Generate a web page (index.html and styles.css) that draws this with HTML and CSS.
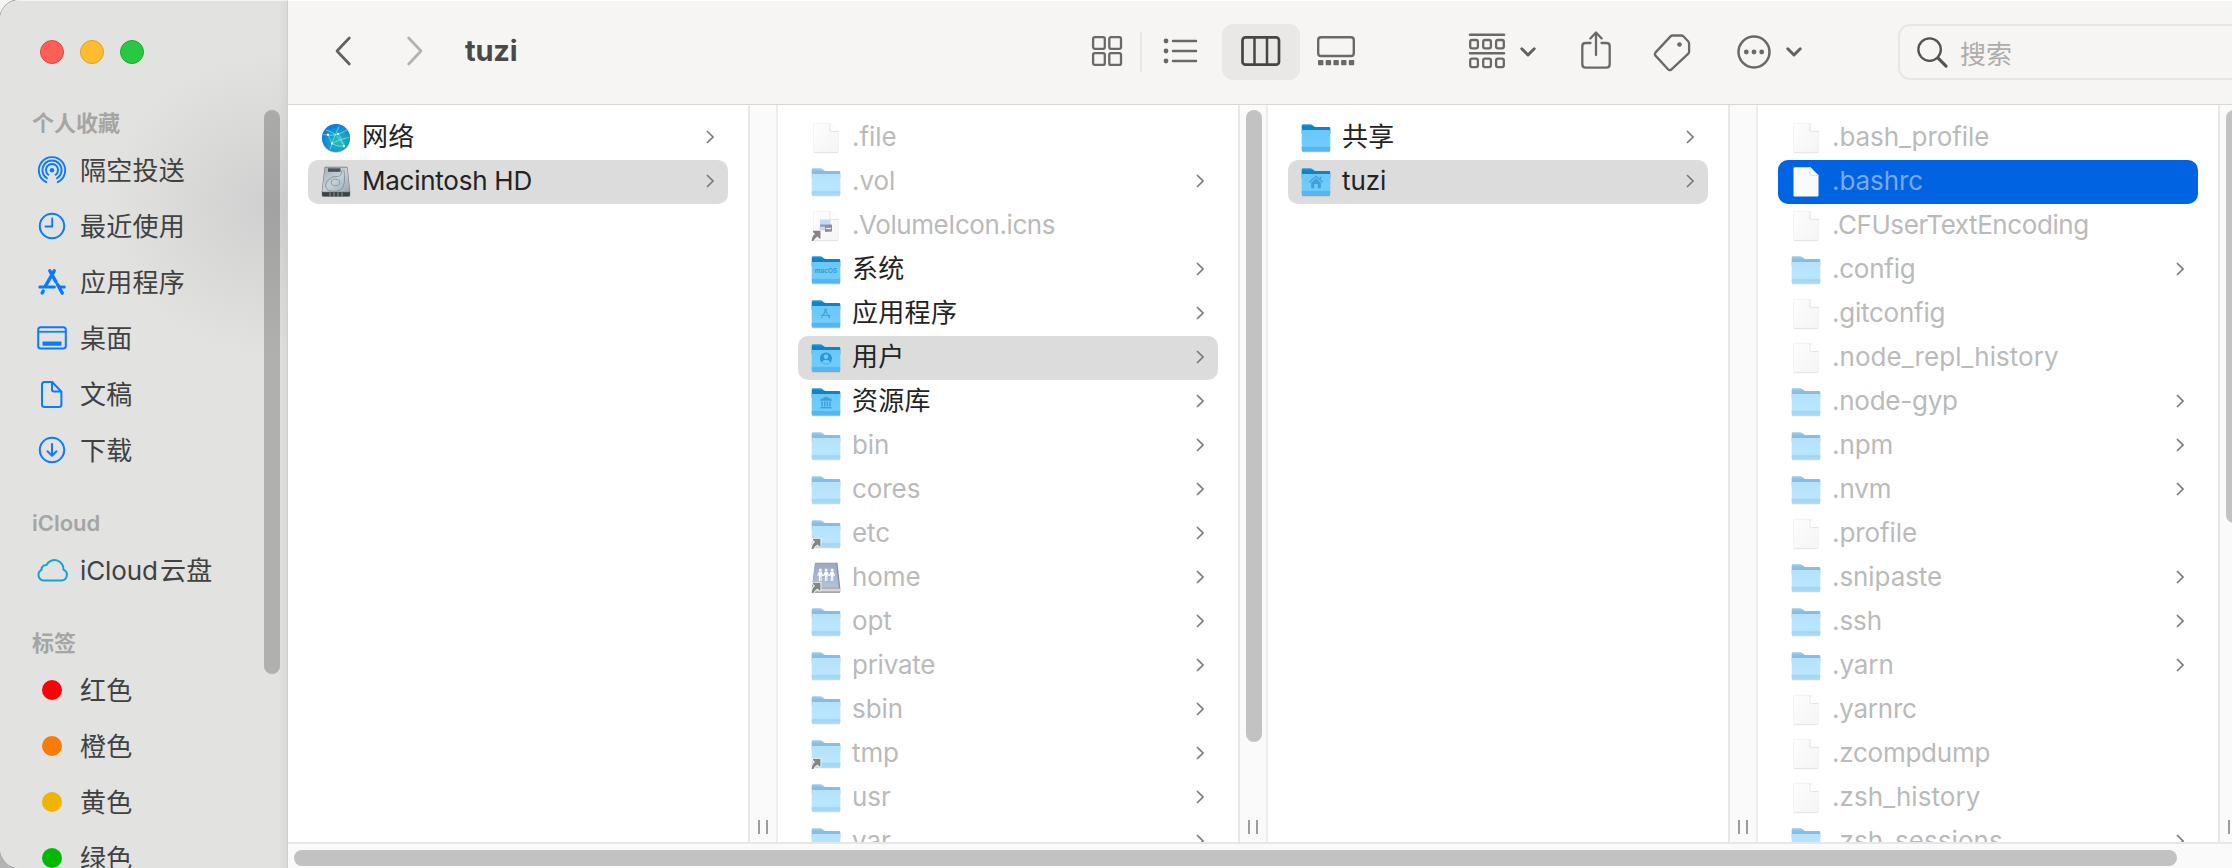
FILE: index.html
```html
<!DOCTYPE html>
<html lang="zh-CN">
<head>
<meta charset="utf-8">
<title>tuzi</title>
<link rel="stylesheet" href="styles.css">
</head>
<body>
<svg class="sprite" aria-hidden="true">
  <defs>
    <linearGradient id="gBack" x1="0" y1="0" x2="0" y2="1"><stop offset="0" stop-color="#2f9fdc"/><stop offset=".25" stop-color="#0f83c6"/><stop offset="1" stop-color="#0f83c6"/></linearGradient>
    <linearGradient id="gFront" x1="0" y1="0" x2="0" y2="1"><stop offset="0" stop-color="#69c7fa"/><stop offset=".75" stop-color="#71ccfb"/><stop offset="1" stop-color="#52b2ea"/></linearGradient>
    <linearGradient id="gBackDim" x1="0" y1="0" x2="0" y2="1"><stop offset="0" stop-color="#9fcdeb"/><stop offset=".4" stop-color="#88bbe2"/><stop offset="1" stop-color="#88bbe2"/></linearGradient>
    <linearGradient id="gFrontDim" x1="0" y1="0" x2="0" y2="1"><stop offset="0" stop-color="#b4e2fb"/><stop offset=".75" stop-color="#b9e6fd"/><stop offset="1" stop-color="#a5d6f3"/></linearGradient>
    <linearGradient id="gDoc" x1="0" y1="0" x2="1" y2="1"><stop offset="0" stop-color="#fdfdfd"/><stop offset="1" stop-color="#f5f5f5"/></linearGradient>
    <radialGradient id="gGlobe" cx=".58" cy=".62" r=".62"><stop offset="0" stop-color="#25bcb8"/><stop offset=".5" stop-color="#15a3c6"/><stop offset="1" stop-color="#0d78dc"/></radialGradient>
    <linearGradient id="gDisk" x1="0" y1="0" x2="1" y2="1"><stop offset="0" stop-color="#a3afb6"/><stop offset=".5" stop-color="#c6d2d8"/><stop offset="1" stop-color="#98a6ad"/></linearGradient>
    <linearGradient id="gServer" x1="0" y1="0" x2="0" y2="1"><stop offset="0" stop-color="#98aac3"/><stop offset="1" stop-color="#b3c2d8"/></linearGradient>
  </defs>
  <symbol id="folder" viewBox="0 0 32 32">
    <path d="M2 28.800h28v.9q0 .5-1 .5H3q-1 0-1-.5z" fill="#000" opacity=".25"/>
    <path d="M1.700 3.600Q1.700 2.200 3 2.200h7.400q1 0 1.800.7l1.600 1.400q.7.600 1.700.6H29q1.300 0 1.300 1.300V12H1.700z" fill="url(#gBack)"/>
    <path d="M1.700 8.900Q1.700 7.900 2.700 7.900h26.600q1 0 1 1v19q0 1.300-1.300 1.300H3q-1.300 0-1.300-1.300z" fill="url(#gFront)"/>
    <path d="M1.700 25.400h28.600M1.700 26.700h28.600" stroke="#3aa0dc" stroke-width=".6" opacity=".6"/>
  </symbol>
  <symbol id="folder-dim" viewBox="0 0 32 32">
    <path d="M2 28.800h28v.9q0 .5-1 .5H3q-1 0-1-.5z" fill="#000" opacity=".16"/>
    <path d="M1.700 3.600Q1.700 2.200 3 2.200h7.400q1 0 1.800.7l1.600 1.400q.7.600 1.700.6H29q1.300 0 1.300 1.300V12H1.700z" fill="url(#gBackDim)"/>
    <path d="M1.700 8.900Q1.700 7.900 2.700 7.900h26.600q1 0 1 1v19q0 1.300-1.300 1.300H3q-1.300 0-1.300-1.300z" fill="url(#gFrontDim)"/>
    <path d="M1.700 25.400h28.600M1.700 26.700h28.600" stroke="#8cc6ea" stroke-width=".6" opacity=".7"/>
  </symbol>
  <symbol id="doc" viewBox="0 0 32 32">
    <path d="M4.700 1.300h15.800l8 8.200v19.700q0 1.200-1.200 1.200H4.700q-1.200 0-1.200-1.200V2.500q0-1.200 1.200-1.200z" fill="url(#gDoc)" stroke="#ededed" stroke-width=".6"/>
    <path d="M4 30.700h24" stroke="#dedede" stroke-width=".8"/>
    <path d="M20 1.300v6.900q0 1.200 1.200 1.200h7.300z" fill="#fff"/>
    <path d="M20 1.300v6.900q0 1.200 1.200 1.200h7.300" fill="none" stroke="#dcdcdc" stroke-width=".8"/>
  </symbol>
  <symbol id="alias" viewBox="0 0 32 32">
    <path d="M1.600 31Q2 26 5 23.900L3 22V20.800h7.500V28.400H9.300L7.600 26.500Q4.500 28 3.400 31z" fill="#858585" stroke="#fff" stroke-width="1.600" paint-order="stroke"/>
  </symbol>
  <symbol id="next" viewBox="0 0 8 14"><path d="M1 1l6 6-6 6" fill="none" stroke="#7b7b7b" stroke-width="1.700"/></symbol>
  <symbol id="down" viewBox="0 0 16 10"><path d="M1.800 1.800L8 8l6.200-6.200" fill="none" stroke="#626160" stroke-width="3" stroke-linecap="round" stroke-linejoin="round"/></symbol>
  <symbol id="apps" viewBox="0 0 32 32">
    <g fill="none" stroke="currentColor" stroke-linecap="round">
      <path d="M13.800 4.800L20 15.800M21.600 18.600l4.700 8.500" stroke-width="3.400"/>
      <path d="M18.200 4.800L9.400 20.200" stroke-width="3.400"/>
      <path d="M7.200 25l-1 1.900" stroke-width="3.400"/>
      <path d="M3.800 21h14.600M23.300 21h5" stroke-width="3"/>
    </g>
  </symbol>
</svg>

<div class="window">
  <aside class="sidebar">
    <div class="lights"><i class="light close"></i><i class="light min"></i><i class="light max"></i></div>
    <nav class="places">
      <h2 class="heading">个人收藏</h2>
      <a class="place"><svg class="pi" viewBox="0 0 32 32"><g fill="none" stroke="#0a7aff" stroke-width="1.900" stroke-linecap="round"><path d="M10.300 28.200a13.200 13.200 0 1 1 11.400 0"/><path d="M11 24.300a9.600 9.600 0 1 1 10 0"/><path d="M12.400 20.800a6 6 0 1 1 7.200 0"/></g><circle cx="16" cy="16.300" r="2.300" fill="#0a7aff"/></svg><span class="label">隔空投送</span></a>
      <a class="place"><svg class="pi" viewBox="0 0 32 32"><circle cx="16" cy="16" r="12.200" fill="none" stroke="#0a7aff" stroke-width="2"/><path d="M16.200 8.500v8H9.500" fill="none" stroke="#0a7aff" stroke-width="1.900" stroke-linecap="round" stroke-linejoin="round"/></svg><span class="label">最近使用</span></a>
      <a class="place"><svg class="pi blue" viewBox="0 0 32 32"><use href="#apps"/></svg><span class="label">应用程序</span></a>
      <a class="place"><svg class="pi" viewBox="0 0 32 32"><rect x="2.200" y="5.300" width="27.600" height="21.200" rx="2.500" fill="none" stroke="#0a7aff" stroke-width="2"/><path d="M2.500 9.800h27" stroke="#0a7aff" stroke-width="1.700"/><rect x="6.500" y="19.500" width="19" height="4.200" rx=".8" fill="#0a7aff"/></svg><span class="label">桌面</span></a>
      <a class="place"><svg class="pi" viewBox="0 0 32 32"><path d="M8.500 4h7.700L25.400 13.700V26.500q0 2.500-2.500 2.500H8.500Q6 29 6 26.500v-20Q6 4 8.500 4zM16 4v7.500q0 2 2 2h7.400" fill="none" stroke="#0a7aff" stroke-width="2" stroke-linejoin="round"/></svg><span class="label">文稿</span></a>
      <a class="place"><svg class="pi" viewBox="0 0 32 32"><circle cx="16" cy="16" r="12.200" fill="none" stroke="#0a7aff" stroke-width="2"/><path d="M16 10v11.500M11.500 17.300l4.500 4.500 4.500-4.500" fill="none" stroke="#0a7aff" stroke-width="2" stroke-linecap="round" stroke-linejoin="round"/></svg><span class="label">下载</span></a>
      <h2 class="heading later">iCloud</h2>
      <a class="place"><svg class="pi" viewBox="0 0 32 32"><path d="M7 26.500h18.500a5.700 5.700 0 0 0 2-10.900 9 9 0 0 0-17-4.600 4.600 4.600 0 0 0-5 4.900A5.700 5.700 0 0 0 7 26.500z" fill="none" stroke="#0fa5d4" stroke-width="2"/></svg><span class="label"><span class="cloud">iCloud</span>云盘</span></a>
      <h2 class="heading later">标签</h2>
      <a class="place"><i class="tag red"></i><span class="label">红色</span></a>
      <a class="place"><i class="tag orange"></i><span class="label">橙色</span></a>
      <a class="place"><i class="tag yellow"></i><span class="label">黄色</span></a>
      <a class="place"><i class="tag green"></i><span class="label">绿色</span></a>
    </nav>
    <div class="side-thumb"></div>
  </aside>

  <main class="main">
    <header class="toolbar">
      <svg class="t-back" viewBox="0 0 16 30"><path d="M14.300 2L2 15l12.300 13" fill="none" stroke="#626160" stroke-width="2.700" stroke-linecap="round" stroke-linejoin="round"/></svg>
      <svg class="t-fwd" viewBox="0 0 16 30"><path d="M1.700 2L14 15 1.700 28" fill="none" stroke="#b3b2b1" stroke-width="2.700" stroke-linecap="round" stroke-linejoin="round"/></svg>
      <h1 class="title">tuzi</h1>
      <svg class="t-grid" viewBox="0 0 30 30"><g fill="none" stroke="#6a6968" stroke-width="2.300"><rect x="1.100" y="1.100" width="11.700" height="11.700" rx="1.700"/><rect x="17.300" y="1.100" width="11.700" height="11.700" rx="1.700"/><rect x="1.100" y="17.200" width="11.700" height="11.700" rx="1.700"/><rect x="17.300" y="17.200" width="11.700" height="11.700" rx="1.700"/></g></svg>
      <i class="divider"></i>
      <svg class="t-list" viewBox="0 0 34 26"><g fill="#6a6968"><circle cx="3" cy="3" r="2.400"/><circle cx="3" cy="13" r="2.400"/><circle cx="3" cy="23" r="2.400"/></g><path d="M10 3h23M10 13h23M10 23h23" stroke="#6a6968" stroke-width="2.500" stroke-linecap="round"/></svg>
      <span class="t-columns"><svg viewBox="0 0 40 32"><rect x="1.500" y="2.300" width="36.500" height="27.400" rx="3" fill="none" stroke="#464545" stroke-width="2.700"/><path d="M13.500 2.500v27M26 2.500v27" stroke="#464545" stroke-width="2.500"/></svg></span>
      <svg class="t-gallery" viewBox="0 0 38 30"><rect x="1.200" y="1.200" width="35.600" height="18.800" rx="2.800" fill="none" stroke="#6a6968" stroke-width="2.400"/><g fill="#6a6968"><rect x="1" y="24" width="5.400" height="5.200" rx=".8"/><rect x="8.700" y="24" width="5.400" height="5.200" rx=".8"/><rect x="16.400" y="24" width="5.400" height="5.200" rx=".8"/><rect x="24.100" y="24" width="5.400" height="5.200" rx=".8"/><rect x="31.800" y="24" width="5.400" height="5.200" rx=".8"/></g></svg>
      <svg class="t-group" viewBox="0 0 36 36"><path d="M1 1.800h34M1 20.300h34" stroke="#6a6968" stroke-width="2.500" stroke-linecap="round"/><g fill="none" stroke="#6a6968" stroke-width="2.300"><rect x="1.200" y="7" width="7.700" height="8.400" rx="1.800"/><rect x="14.200" y="7" width="7.700" height="8.400" rx="1.800"/><rect x="27.100" y="7" width="7.700" height="8.400" rx="1.800"/><rect x="1.200" y="25.700" width="7.700" height="8.400" rx="1.800"/><rect x="14.200" y="25.700" width="7.700" height="8.400" rx="1.800"/><rect x="27.100" y="25.700" width="7.700" height="8.400" rx="1.800"/></g></svg>
      <svg class="t-down"><use href="#down"/></svg>
      <svg class="t-share" viewBox="0 0 30 38"><g fill="none" stroke="#6a6968" stroke-width="2.300" stroke-linecap="round" stroke-linejoin="round"><path d="M9.500 12H4.700q-3.400 0-3.400 3.300v18q0 3.400 3.400 3.400h20.600q3.400 0 3.400-3.400v-18q0-3.300-3.400-3.300h-4.800"/><path d="M15 24V2M9.300 7.500L15 1.500l5.700 6"/></g></svg>
      <svg class="t-tag" viewBox="0 0 40 40"><path d="M3.600 20.400L18.300 4.600Q19.300 3.500 20.800 3.500h8.400q1.400 0 2.400 1l4.500 4.700q1 1 1 2.500v7.700q0 1.400-1 2.500L19.500 37.300q-1.800 1.700-3.500 0L3.700 23.900q-1.600-1.800-.1-3.500z" fill="none" stroke="#6a6968" stroke-width="2.300" stroke-linejoin="round"/><circle cx="27.500" cy="12.500" r="2.300" fill="#6a6968"/></svg>
      <svg class="t-more" viewBox="0 0 34 34"><circle cx="17" cy="17" r="15.500" fill="none" stroke="#6a6968" stroke-width="2.500"/><g fill="#6a6968"><circle cx="9.300" cy="17" r="2.400"/><circle cx="17" cy="17" r="2.400"/><circle cx="24.700" cy="17" r="2.400"/></g></svg>
      <svg class="t-down"><use href="#down"/></svg>
      <div class="search"><svg viewBox="0 0 32 32"><circle cx="13" cy="13" r="11.600" fill="none" stroke="#555453" stroke-width="2.400"/><path d="M21.500 21.500L30 30" stroke="#555453" stroke-width="3.200" stroke-linecap="round"/></svg><span>搜索</span></div>
    </header>

    <div class="browser">
      <section class="column">
        <ul class="list">
          <li class="row"><svg class="ic" viewBox="0 0 32 32"><circle cx="16" cy="16.900" r="14.100" fill="#000" opacity=".2"/><circle cx="16" cy="16" r="14" fill="url(#gGlobe)"/><g fill="none" stroke="#9deef6" stroke-width=".8" opacity=".75"><path d="M3 12.500q12 3 24-4.500M6 8q10 2 18 16M10 27.500q4-13 9-23M19 13q3 6 5.500 11M12 21.500q8-5 17-6M12 21.500q6 4 12 2.500M8 12.600l4 9"/></g><g fill="#fff"><circle cx="8" cy="12.600" r="1.200"/><circle cx="18" cy="12" r="1"/><circle cx="24" cy="24" r="1.200"/><circle cx="12" cy="21.500" r="1"/></g></svg><span class="name cn">网络</span><svg class="next"><use href="#next"/></svg></li>
          <li class="row selected"><svg class="ic" viewBox="0 0 32 32"><path d="M4.400 1.700q.2-.9 1.200-.9h20.800q1 0 1.200.9l2.600 23.500v4q0 1.500-1.500 1.500H3.300q-1.500 0-1.500-1.500v-4z" fill="#6b777e"/><path d="M4.900 1.900q.1-.5.700-.5h20.800q.6 0 .7.500L29.700 25q0 .8-.8.800H3.100q-.8 0-.8-.8z" fill="url(#gDisk)"/><rect x="8" y="2.300" width="12.500" height="3.500" fill="#4c5358"/><path d="M24 4q2 16-3 19.500-6 3.500-13 .5-4.500-3.500-.5-9.500 4.500-5 10-4 3.500.2 4.500-6" fill="none" stroke="#8593 9b" stroke-width=".8"/><path d="M24 4q2 16-3 19.500-6 3.500-13 .5-4.500-3.500-.5-9.500 4.500-5 10-4 3.500.2 4.500-6" fill="none" stroke="#84929a" stroke-width=".9"/><ellipse cx="15.500" cy="16.500" rx="4.200" ry="3.300" fill="none" stroke="#84929a" stroke-width=".9"/><path d="M2.200 26.200h27.600v2.600q0 1.400-1.400 1.400H3.600q-1.400 0-1.400-1.400z" fill="#3b4246"/><path d="M10 26.500v3.500M14 26.500v3.500M18 26.500v3.500M22 26.500v3.500" stroke="#8d989e" stroke-width="1.100"/></svg><span class="name caps">Macintosh HD</span><svg class="next"><use href="#next"/></svg></li>
        </ul>
        <div class="gutter"><i class="grip"></i></div>
      </section>

      <section class="column">
        <ul class="list">
          <li class="row hid"><svg class="ic"><use href="#doc"/></svg><span class="name">.file</span></li>
          <li class="row hid"><svg class="ic"><use href="#folder-dim"/></svg><span class="name">.vol</span><svg class="next"><use href="#next"/></svg></li>
          <li class="row hid"><svg class="ic" viewBox="0 0 32 32"><use href="#doc"/><rect x="10" y="9.500" width="10.500" height="8" fill="#c3d9f8"/><rect x="10" y="14.500" width="10.500" height="2.200" fill="#8e9cc0"/><rect x="9.500" y="17" width="10" height="3.500" fill="#d5d8e4"/><path d="M15 15.500l7-1v7l-7 .5z" fill="#8c8f96"/><path d="M16 18.500h5" stroke="#eef0f4" stroke-width="1.200"/><use href="#alias"/></svg><span class="name caps tight">.VolumeIcon.icns</span></li>
          <li class="row"><svg class="ic" viewBox="0 0 32 32"><use href="#folder"/><text class="macos" x="16" y="18.600" text-anchor="middle" textLength="22.500">macOS</text></svg><span class="name cn">系统</span><svg class="next"><use href="#next"/></svg></li>
          <li class="row"><svg class="ic" viewBox="0 0 32 32"><use href="#folder"/><svg class="emb" x="9.500" y="10" width="13" height="13" viewBox="1 2 30 28"><use href="#apps"/></svg></svg><span class="name cn">应用程序</span><svg class="next"><use href="#next"/></svg></li>
          <li class="row selected"><svg class="ic" viewBox="0 0 32 32"><use href="#folder"/><circle cx="16" cy="16.500" r="6" fill="#2e95d3"/><circle cx="16" cy="14.600" r="2.300" fill="#6fcafa"/><path d="M11.900 20.600q.8-2.900 4.100-2.900t4.100 2.900q-1.800 1.400-4.100 1.400t-4.100-1.400z" fill="#6fcafa"/></svg><span class="name cn">用户</span><svg class="next"><use href="#next"/></svg></li>
          <li class="row"><svg class="ic" viewBox="0 0 32 32"><use href="#folder"/><path d="M16 10.500l6 3v1.300H10v-1.300zM11.300 15.500h1.500v5h-1.500zM14 15.500h1.500v5H14zM16.600 15.500h1.500v5h-1.500zM19.300 15.500h1.500v5h-1.500zM10.500 21h11v1.400h-11z" fill="#429fd9"/></svg><span class="name cn">资源库</span><svg class="next"><use href="#next"/></svg></li>
          <li class="row hid"><svg class="ic"><use href="#folder-dim"/></svg><span class="name">bin</span><svg class="next"><use href="#next"/></svg></li>
          <li class="row hid"><svg class="ic"><use href="#folder-dim"/></svg><span class="name">cores</span><svg class="next"><use href="#next"/></svg></li>
          <li class="row hid"><svg class="ic" viewBox="0 0 32 32"><use href="#folder-dim"/><use href="#alias"/></svg><span class="name">etc</span><svg class="next"><use href="#next"/></svg></li>
          <li class="row hid"><svg class="ic" viewBox="0 0 32 32"><path d="M5 .8h22.500L30.300 26v4.300H1.800V26z" fill="#8492a8"/><path d="M5.300 1.200h20.900l2.600 24.500H2.300z" fill="url(#gServer)"/><path d="M2 26.500h28v3.300H2z" fill="#d8d5cf"/><path d="M2 30.200h28" stroke="#8e8b86" stroke-width="1"/><g fill="#fff"><circle cx="10.300" cy="8" r="1.500"/><circle cx="16.200" cy="8" r="1.500"/><circle cx="22.100" cy="8" r="1.500"/><path d="M8.900 9.700h2.800l1.600 4-.9.400-.9-1.500V19h-1v-4h-.5v4h-1v-6.400L8.200 14l-1-.3zM14.800 9.700h2.800l1.600 4-.9.400-.9-1.500V19h-1v-4h-.5v4h-1v-6.400l-.8 1.400-1-.3zM20.700 9.700h2.800l1.600 4-.9.400-.9-1.500V19h-1v-4h-.5v4h-1v-6.400L20 14l-1-.3z"/></g><use href="#alias"/></svg><span class="name">home</span><svg class="next"><use href="#next"/></svg></li>
          <li class="row hid"><svg class="ic"><use href="#folder-dim"/></svg><span class="name">opt</span><svg class="next"><use href="#next"/></svg></li>
          <li class="row hid"><svg class="ic"><use href="#folder-dim"/></svg><span class="name caps">private</span><svg class="next"><use href="#next"/></svg></li>
          <li class="row hid"><svg class="ic"><use href="#folder-dim"/></svg><span class="name">sbin</span><svg class="next"><use href="#next"/></svg></li>
          <li class="row hid"><svg class="ic" viewBox="0 0 32 32"><use href="#folder-dim"/><use href="#alias"/></svg><span class="name">tmp</span><svg class="next"><use href="#next"/></svg></li>
          <li class="row hid"><svg class="ic"><use href="#folder-dim"/></svg><span class="name">usr</span><svg class="next"><use href="#next"/></svg></li>
          <li class="row hid"><svg class="ic"><use href="#folder-dim"/></svg><span class="name">var</span><svg class="next"><use href="#next"/></svg></li>
        </ul>
        <div class="gutter"><i class="thumb"></i><i class="grip"></i></div>
      </section>

      <section class="column">
        <ul class="list">
          <li class="row"><svg class="ic"><use href="#folder"/></svg><span class="name cn">共享</span><svg class="next"><use href="#next"/></svg></li>
          <li class="row selected"><svg class="ic" viewBox="0 0 32 32"><use href="#folder"/><path d="M9.300 16.300L16 10.300l6.700 6" fill="none" stroke="#429fd9" stroke-width="1.300"/><path d="M19.700 10.800h1.500v3l-1.500-1.300zM16 12.300l4.800 4.400v5.600h-3v-4.300h-3.600v4.300h-3v-5.600z" fill="#429fd9"/></svg><span class="name">tuzi</span><svg class="next"><use href="#next"/></svg></li>
        </ul>
        <div class="gutter"><i class="grip"></i></div>
      </section>

      <section class="column">
        <ul class="list">
          <li class="row hid"><svg class="ic"><use href="#doc"/></svg><span class="name">.bash_profile</span></li>
          <li class="row active"><svg class="ic" viewBox="0 0 32 32"><path d="M4.700 1.300h15.800l8 8.200v19.700q0 1.200-1.200 1.200H4.700q-1.200 0-1.200-1.200V2.500q0-1.200 1.200-1.200z" fill="#fafafa"/><path d="M20 1.300v6.900q0 1.200 1.200 1.200h7.300z" fill="#fff" stroke="#d0d0d0" stroke-width=".8"/></svg><span class="name">.bashrc</span></li>
          <li class="row hid"><svg class="ic"><use href="#doc"/></svg><span class="name caps tight">.CFUserTextEncoding</span></li>
          <li class="row hid"><svg class="ic"><use href="#folder-dim"/></svg><span class="name caps">.config</span><svg class="next"><use href="#next"/></svg></li>
          <li class="row hid"><svg class="ic"><use href="#doc"/></svg><span class="name caps">.gitconfig</span></li>
          <li class="row hid"><svg class="ic"><use href="#doc"/></svg><span class="name loose">.node_repl_history</span></li>
          <li class="row hid"><svg class="ic"><use href="#folder-dim"/></svg><span class="name caps">.node-gyp</span><svg class="next"><use href="#next"/></svg></li>
          <li class="row hid"><svg class="ic"><use href="#folder-dim"/></svg><span class="name">.npm</span><svg class="next"><use href="#next"/></svg></li>
          <li class="row hid"><svg class="ic"><use href="#folder-dim"/></svg><span class="name">.nvm</span><svg class="next"><use href="#next"/></svg></li>
          <li class="row hid"><svg class="ic"><use href="#doc"/></svg><span class="name">.profile</span></li>
          <li class="row hid"><svg class="ic"><use href="#folder-dim"/></svg><span class="name">.snipaste</span><svg class="next"><use href="#next"/></svg></li>
          <li class="row hid"><svg class="ic"><use href="#folder-dim"/></svg><span class="name">.ssh</span><svg class="next"><use href="#next"/></svg></li>
          <li class="row hid"><svg class="ic"><use href="#folder-dim"/></svg><span class="name">.yarn</span><svg class="next"><use href="#next"/></svg></li>
          <li class="row hid"><svg class="ic"><use href="#doc"/></svg><span class="name caps">.yarnrc</span></li>
          <li class="row hid"><svg class="ic"><use href="#doc"/></svg><span class="name caps">.zcompdump</span></li>
          <li class="row hid"><svg class="ic"><use href="#doc"/></svg><span class="name loose">.zsh_history</span></li>
          <li class="row hid"><svg class="ic"><use href="#folder-dim"/></svg><span class="name loose">.zsh_sessions</span><svg class="next"><use href="#next"/></svg></li>
        </ul>
        <div class="gutter"><i class="thumb short"></i><i class="grip"></i></div>
      </section>
    </div>
    <div class="hscroll"><i class="hthumb"></i></div>
  </main>
</div>
</body>
</html>
```

FILE: styles.css
```css
* { box-sizing: border-box; }
html, body { margin: 0; height: 100%; overflow: hidden; }
body {
  background: linear-gradient(#f4f4f4 50%, #b4b4b4 50%);
  font-family: Inter, "Noto Sans CJK SC", sans-serif;
  font-size: 26px;
  color: #232323;
}
svg { display: block; flex: none; overflow: visible; }
i { display: block; flex: none; }
.sprite { position: absolute; width: 0; height: 0; }

.window {
  display: flex;
  width: 2232px;
  height: 868px;
  border-radius: 20px 0 0 20px;
  overflow: hidden;
  background: #fff;
  box-shadow: 0 0 0 1px #a5a5a5;
}

/* Sidebar */
.sidebar {
  position: relative;
  flex: none;
  width: 288px;
  height: 868px;
  overflow: hidden;
  border-top: 1px solid #f2f2f1;
  border-right: 1px solid #cfcfce;
  background:
    linear-gradient(to right, transparent 278px, rgba(0, 0, 0, .035) 287px),
    radial-gradient(ellipse 165px 150px at 272px 204px, rgba(182, 182, 185, .42), rgba(190, 190, 192, .28) 45%, transparent 100%),
    #e2e2e0;
}
.lights { display: flex; gap: 16px; padding: 39px 0 0 40px; }
.light { width: 24px; height: 24px; border-radius: 50%; border: 1px solid; }
.close { background: #ff5f57; border-color: #e0443e; }
.min { background: #febc2e; border-color: #dea123; }
.max { background: #28c840; border-color: #1aab29; }
.places { padding-top: 42px; color: #414141; }
.heading {
  margin: 0;
  padding-left: 32px;
  height: 36px;
  line-height: 35px;
  font-size: 22px;
  font-weight: 600;
  color: #a5a5a4;
}
.heading.later { margin-top: 28px; }
.place { display: flex; align-items: center; height: 56px; padding-left: 36px; white-space: nowrap; }
.label { padding-bottom: 3px; letter-spacing: .25px; }
.pi { width: 32px; height: 32px; margin-right: 12px; }
.blue { color: #0a7aff; }
.cloud { margin-right: 2px; letter-spacing: -.1px; }
.tag { width: 20px; height: 20px; border-radius: 50%; margin: 0 18px 0 6px; }
.red { background: #ff0008; }
.orange { background: #f97b00; }
.yellow { background: #f0b400; }
.green { background: #00ba00; }
.side-thumb {
  position: absolute;
  left: 264px;
  top: 109px;
  width: 16px;
  height: 564px;
  border-radius: 8px;
  background: rgba(0, 0, 0, .22);
}

/* Toolbar */
.main { display: flex; flex-direction: column; flex: 1; min-width: 0; }
.toolbar {
  display: flex;
  align-items: center;
  flex: none;
  height: 105px;
  padding: 0 0 1px 47px;
  border-top: 1px solid #fff;
  border-bottom: 1px solid #d8d7d5;
  background: #f6f5f3;
}
.t-back { width: 16px; height: 30px; margin-bottom: 2px; }
.t-fwd { width: 16px; height: 30px; margin: 0 0 2px 56px; }
.title { width: 627px; margin: 0 0 2px 42px; font-size: 29px; font-weight: 650; line-height: 40px; letter-spacing: -.2px; color: #4a4948; flex: none; }
.t-grid { width: 30px; height: 30px; margin-bottom: 2px; }
.divider { width: 2px; height: 40px; margin-left: 18px; background: #e7e6e4; }
.t-list { width: 34px; height: 26px; margin: 0 0 2px 21px; }
.t-columns { display: flex; flex: none; width: 78px; height: 56px; margin-left: 25px; padding-left: 19px; border-radius: 11px; background: #e9e8e6; align-items: center; }
.t-columns svg { width: 40px; height: 32px; margin-bottom: 2px; }
.t-gallery { width: 38px; height: 30px; margin: 0 0 2px 17px; }
.t-group { width: 36px; height: 36px; margin: 0 0 2px 114px; }
.t-down { width: 16px; height: 10px; margin-left: 15px; }
.t-share { width: 30px; height: 38px; margin: 0 0 5px 45px; }
.t-tag { width: 40px; height: 40px; margin: 0 0 1px 41px; }
.t-more { width: 34px; height: 34px; margin: 0 0 1px 45px; }
.search {
  display: flex;
  align-items: center;
  flex: 1;
  height: 56px;
  margin-left: 96px;
  padding-left: 17px;
  border: 2px solid #e8e7e5;
  border-right: 0;
  border-radius: 12px 0 0 12px;
  color: #aeadac;
}
.search svg { width: 31px; height: 31px; margin-right: 12px; }
.search span { padding-top: 1px; }

/* Columns */
.browser { display: flex; flex: 1; min-height: 0; overflow: hidden; }
.column { display: flex; flex: none; width: 490px; height: 737px; }
.list { flex: none; width: 460px; height: 737px; margin: 0; padding: 11px 20px 0; overflow: hidden; list-style: none; }
.row { display: flex; align-items: center; height: 44px; padding: 0 14px 0 12px; border-radius: 10px; }
.ic { width: 32px; height: 32px; }
.emb { color: #429fd9; }
.macos { font: 500 6.500px Inter, sans-serif; fill: #2b8fce; }
.name { flex: 1; margin-left: 10px; line-height: 42px; padding-bottom: 2px; white-space: nowrap; letter-spacing: -.08px; }
.cn { letter-spacing: .3px; }
.caps { letter-spacing: -.25px; }
.tight { letter-spacing: -.42px; }
.loose { letter-spacing: .05px; }
.next { width: 8px; height: 14px; margin-bottom: 2px; }
.selected { background: #dcdcdc; }
.active { background: #0063e1; color: #79a8ee; }
.hid { color: #bababa; }
.gutter {
  position: relative;
  flex: none;
  width: 30px;
  height: 737px;
  border-left: 2px solid #e7e7e7;
  border-right: 2px solid #ededed;
  background: #fafafa;
}
.grip { position: absolute; left: 8px; bottom: 8px; width: 10px; height: 14px; border: solid #9c9c9c; border-width: 0 2px; }
.thumb { position: absolute; left: 6px; top: 5px; width: 16px; height: 632px; border-radius: 8px; background: #c2c2c2; }
.thumb.short { height: 413px; }
.hscroll { flex: none; height: 26px; padding: 6px 0 0 6px; border-top: 2px solid #e7e7e7; background: #fafafa; }
.hthumb { width: 1883px; height: 16px; border-radius: 8px; background: #c2c2c2; }
```
